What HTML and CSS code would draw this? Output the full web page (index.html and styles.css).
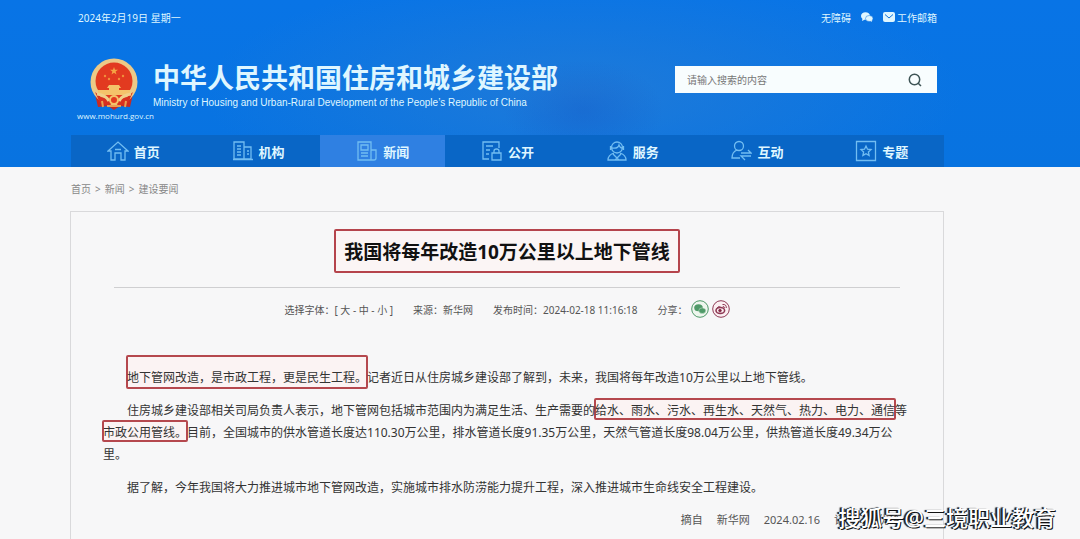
FILE: index.html
```html
<!DOCTYPE html>
<html lang="zh-CN">
<head>
    <meta charset="UTF-8">
    <meta name="viewport" content="width=device-width, initial-scale=1.0">
    <title>我国将每年改造10万公里以上地下管线</title>
    <link rel="stylesheet" href="styles.css">
</head>
<body>
    <header class="header">
        <div class="topbar">
            <span>2024年2月19日 星期一</span>
            <div class="top-links">
                <a href="#">无障碍</a>
                <a href="#" aria-label="微信">
                    <svg width="12" height="10" viewBox="0 0 24 20" fill="#dff6ff"><ellipse cx="9" cy="8" rx="9" ry="7.5"/><path d="M3 13l-1 5 6-3z"/><ellipse cx="16.500" cy="13" rx="7.500" ry="6" stroke="#0f72dc"/><path d="M18 17l4 3-1-5z"/></svg>
                </a>
                <a href="#" class="mail">
                    <svg width="12" height="10" viewBox="0 0 24 20"><rect width="24" height="20" rx="4" fill="#dff6ff"/><path d="M4 5l8 7 8-7" fill="none" stroke="#0f72dc" stroke-width="2"/></svg>
                    工作邮箱
                </a>
            </div>
        </div>

        <div class="brand-row">
            <div class="emblem">
                <svg width="48" height="52" viewBox="0 0 48 52">
                    <path d="M5 36l3 13 10-1 6 4 6-4 10 1 3-13z" fill="#c92a22"/>
                    <circle cx="24" cy="24" r="23.500" fill="#ecc987"/>
                    <circle cx="24" cy="23" r="18.500" fill="#e23a20"/>
                    <path d="M24 9l1 2.800h3l-2.400 1.800.9 2.900-2.500-1.800-2.500 1.800.9-2.900-2.400-1.800h3z" fill="#f5a544"/>
                    <g fill="#f0903c"><circle cx="15" cy="18" r="1.200"/><circle cx="19" cy="21" r="1.200"/><circle cx="29" cy="21" r="1.200"/><circle cx="33" cy="18" r="1.200"/></g>
                    <path d="M19 27h10l2 3h-2v2h11v5H8v-5h11v-2h-2z" fill="#f4c36a"/>
                    <path d="M5 34l5 11 9 3 5-4 5 4 9-3 5-11-6 5-13 3-13-3z" fill="#d8301f"/>
                    <path d="M7 36q9 1 12 7M41 36q-9 1-12 7" fill="none" stroke="#f0d08a" stroke-width="3"/>
                    <circle cx="24" cy="42" r="4" fill="#e23a20" stroke="#f4c36a" stroke-width="2"/>
                    <path d="M12 43l1 6M36 43l-1 6M17 48h14" stroke="#e9a053" stroke-width="2"/>
                </svg>
                <span>www.mohurd.gov.cn</span>
            </div>
            <div class="brand">
                <div class="brand-cn">中华人民共和国住房和城乡建设部</div>
                <div class="brand-en">Ministry of Housing and Urban-Rural Development of the People’s Republic of China</div>
            </div>
            <form class="search">
                <input type="text" placeholder="请输入搜索的内容" aria-label="搜索">
                <button type="button" aria-label="搜索">
                    <svg width="14" height="14" viewBox="0 0 14 14" fill="none" stroke="#3f5556" stroke-width="1.500"><circle cx="6.500" cy="6.500" r="5.200"/><path d="M10 10l3 3"/></svg>
                </button>
            </form>
        </div>

        <nav class="nav">
            <a href="#">
                <svg viewBox="0 0 22 22"><path d="M1 11L11 2l10 9h-3v9h-4v-7H8v7H4v-9zM8 9.500h6"/></svg>首页
            </a>
            <a href="#">
                <svg viewBox="0 0 22 22"><path d="M2 2h10v17H2zM12 7h7v12h-7M5 6h4M5 9h4M5 12h4M5 15h4M15 11h2M15 14h2M1 19.500h20"/></svg>机构
            </a>
            <a href="#" class="active">
                <svg viewBox="0 0 22 22"><path d="M2 2h13v18H2zM15 10h5v8q0 2-2 2h-3M5 5h7v5H5zM5 13h7M5 16h7"/></svg>新闻
            </a>
            <a href="#">
                <svg viewBox="0 0 22 22"><path d="M8 19H2V2h16v6M5 6h7M5 10h4M5 14h3M11 13h9v7h-9zM13 13v-2q0-2 2.500-2T18 11v2"/></svg>公开
            </a>
            <a href="#">
                <svg viewBox="0 0 22 22"><circle cx="11" cy="7.500" r="5.500"/><path d="M6 8q6 1 7-3 1 3 3 3M4.500 6v4M17.500 6v4M8 13q-6 2-6 7h18q0-5-6-7M7 14l4 4 4-4M9 20l2-2 2 2"/></svg>服务
            </a>
            <a href="#">
                <svg viewBox="0 0 22 22"><circle cx="9" cy="6" r="4.500"/><path d="M7 10q-5 2-5 8h8M11 13h10l-3-3M21 16H11l4 4"/></svg>互动
            </a>
            <a href="#">
                <svg viewBox="0 0 22 22"><path d="M1.500 1.500h19v19h-19zM11 6l1.500 3.200 3.500.4-2.600 2.300.7 3.500-3.100-1.700-3.100 1.700.7-3.500L6 9.600l3.500-.4z"/></svg>专题
            </a>
        </nav>
    </header>

    <div class="crumbs">
        <a href="#">首页</a><span>&gt;</span><a href="#">新闻</a><span>&gt;</span><a href="#">建设要闻</a>
    </div>

    <main class="card">
        <div class="title-row">
            <h1>我国将每年改造10万公里以上地下管线</h1>
        </div>
        <div class="meta">
            <span>选择字体：[ <a href="#">大</a> - <a href="#">中</a> - <a href="#">小</a> ]</span>
            <span>来源：新华网</span>
            <span>发布时间：2024-02-18 11:16:18</span>
            <div class="share">
                分享：
                <a href="#" aria-label="分享到微信">
                    <svg width="18" height="18" viewBox="0 0 18 18"><circle cx="9" cy="9" r="8.300" fill="#eef6ee" stroke="#4f9a68"/><ellipse cx="7.500" cy="7.800" rx="4.300" ry="3.500" fill="#4f9a68"/><ellipse cx="11.300" cy="10.700" rx="3.500" ry="2.800" fill="#4f9a68" stroke="#cfe6d4" stroke-width=".5"/></svg>
                </a>
                <a href="#" aria-label="分享到微博">
                    <svg width="18" height="18" viewBox="0 0 18 18" fill="none" stroke="#8f3a55"><circle cx="9" cy="9" r="8.300" fill="#fbeff2"/><ellipse cx="8.300" cy="10.500" rx="4.300" ry="3" stroke-width="1.600"/><circle cx="8" cy="10.600" r="1.300" fill="#7c2440"/><path d="M4.500 8.500q2-3 4-1.500M10.500 4.500q4-.5 3.800 3.500M10.800 6.500q1.800 0 1.600 1.600"/></svg>
                </a>
            </div>
        </div>

        <article class="content">
            <p><mark class="tall">地下管网改造，是市政工程，更是民生工程。</mark>记者近日从住房城乡建设部了解到，未来，我国将每年改造10万公里以上地下管线。</p>
            <p>住房城乡建设部相关司局负责人表示，地下管网包括城市范围内为满足生活、生产需要的<mark>给水、雨水、污水、再生水、天然气、热力、电力、通信</mark>等<mark>市政公用管线。</mark>目前，全国城市的供水管道长度达110.30万公里，排水管道长度91.35万公里，天然气管道长度98.04万公里，供热管道长度49.34万公里。</p>
            <p>据了解，今年我国将大力推进城市地下管网改造，实施城市排水防涝能力提升工程，深入推进城市生命线安全工程建设。</p>
        </article>
        <div class="source">
            <span>摘自</span>
            <span>新华网</span>
            <span>2024.02.16</span>
            <span>记者　王优玲</span>
        </div>
    </main>

    <div class="watermark">搜狐号@三境职业教育</div>
</body>
</html>
```
FILE: styles.css
```css
* {
    box-sizing: border-box;
}
body {
    margin: 0;
    height: 100vh;
    overflow: hidden;
    display: flex;
    flex-direction: column;
    background: #f7f7f8;
    color: #333;
    font-family: "Noto Sans", "Noto Sans CJK SC", sans-serif;
    font-size: 10px;
}
a {
    color: inherit;
    text-decoration: none;
}

/* Header */
.header {
    padding: 0 136px 0 71px;
    background:
        radial-gradient(ellipse 80px 50px at 54% 66%, rgba(20, 85, 195, 0.35), transparent),
        radial-gradient(ellipse 380px 120px at 54% 55%, rgba(36, 124, 215, 0.8), transparent),
        linear-gradient(to bottom, #0874e6, #0873e0);
    color: #dff6ff;
}
.topbar {
    display: flex;
    justify-content: space-between;
    align-items: center;
    height: 34px;
    padding: 0 7px;
}
.top-links {
    display: flex;
    align-items: center;
    gap: 10px;
}
.top-links a,
.share a {
    display: flex;
    align-items: center;
}
.top-links .mail {
    gap: 2px;
}
.brand-row {
    display: flex;
    align-items: flex-start;
    height: 101px;
    padding: 0 7px;
}
.emblem {
    display: flex;
    flex-direction: column;
    align-items: center;
    width: 75px;
    padding-top: 24px;
    font-family: "Open Sans", sans-serif;
    font-size: 8px;
    line-height: 12px;
    white-space: nowrap;
}
.emblem svg {
    margin-right: 4px;
}
.brand {
    flex: 1;
    padding-top: 26px;
    white-space: nowrap;
}
.brand-cn {
    font-size: 27px;
    line-height: 36px;
    font-weight: 700;
}
.brand-en {
    font-family: "Liberation Sans", sans-serif;
    font-size: 10px;
    line-height: 14px;
}
.search {
    display: flex;
    width: 262px;
    height: 27px;
    margin-top: 32px;
    background: #f8fdfe;
}
.search input {
    flex: 1;
    min-width: 0;
    padding: 0 12px;
    border: 0;
    background: none;
    font: inherit;
}
.search input::placeholder {
    color: #777;
}
.search button {
    display: flex;
    align-items: center;
    padding: 0 15px;
    border: 0;
    background: none;
}
.nav {
    display: flex;
    height: 32px;
    background: #0966c6;
    font-size: 13px;
    font-weight: 700;
}
.nav a {
    flex: 1;
    display: flex;
    align-items: center;
    justify-content: center;
    gap: 5px;
}
.nav .active {
    background: #2f80e2;
}
.nav svg {
    width: 22px;
    height: 22px;
    fill: none;
    stroke: #72bdf2;
    stroke-width: 1.3;
}

/* Article */
.crumbs {
    display: flex;
    gap: 4px;
    padding: 14px 71px;
    line-height: 16px;
    color: #888;
}
.card {
    flex: 1;
    margin: 0 136px 0 70px;
    padding: 0 32px;
    border: 1px solid #d9d9db;
    border-bottom: 0;
}
.title-row {
    display: flex;
    justify-content: center;
    margin: 0 11px;
    padding: 17px 0 14px;
    border-bottom: 1px solid #cfcfd1;
}
h1 {
    margin: 0;
    padding: 2px 8px 0;
    border: 2px solid #b5444c;
    border-radius: 2px;
    background: #fbf5f5;
    color: #111;
    font-size: 19px;
    line-height: 38px;
    white-space: nowrap;
}
.meta {
    display: flex;
    justify-content: center;
    align-items: center;
    gap: 20px;
    height: 42px;
    color: #555;
    white-space: nowrap;
}
.share {
    display: flex;
    align-items: center;
    gap: 3px;
}
.content {
    padding-top: 37px;
    font-size: 12px;
    line-height: 22px;
}
.content p {
    margin: 0 0 11px;
    text-indent: 2em;
}
mark {
    position: relative;
    background: none;
    color: inherit;
}
/* Red pen frame round the highlighted words */
mark::before {
    content: "";
    position: absolute;
    inset: -4px -1px -1px;
    z-index: -1;
    border: 2px solid #b5484e;
    border-radius: 2px;
    background: #fbf3f3;
}
mark.tall::before {
    inset: -14px -1px -3px;
}
.source {
    display: flex;
    justify-content: flex-end;
    gap: 14px;
    padding-right: 11px;
    font-size: 11px;
    line-height: 20px;
    color: #555;
}
.watermark {
    position: absolute;
    right: 24px;
    bottom: 6px;
    font-size: 22px;
    line-height: 32px;
    font-weight: 500;
    color: #fff;
    text-shadow: -1px 0 #111, 1px 1px #111, -2px 0 1px #222;
}
```
